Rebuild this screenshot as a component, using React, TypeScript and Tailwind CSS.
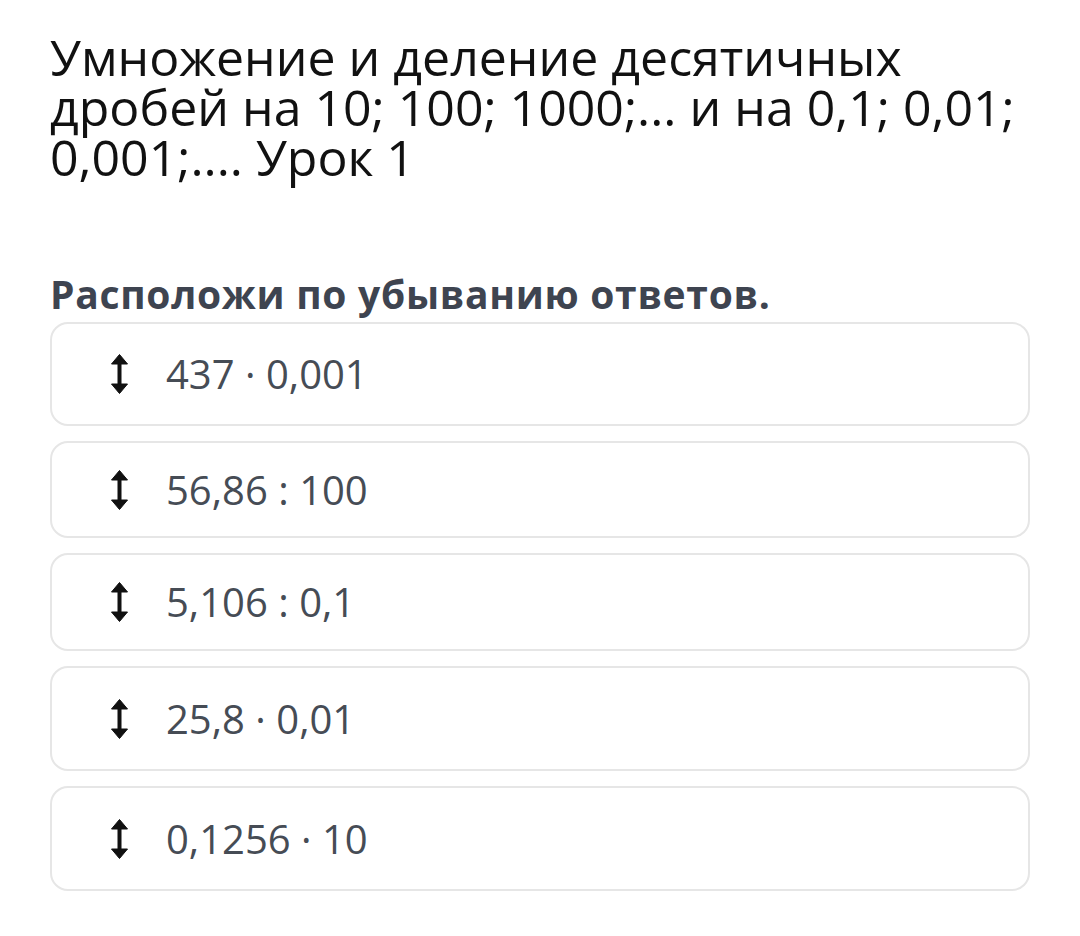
import React from 'react';

// ─── Data ─────────────────────────────────────────────────────────────────────
const ITEMS: { label: string; cls: string }[] = [
  { label: '437 · 0,001',  cls: 'h-[104px]' },
  { label: '56,86 : 100',  cls: 'h-[97px]' },
  { label: '5,106 : 0,1',  cls: 'h-[98px]' },
  { label: '25,8 · 0,01',  cls: 'h-[105px]' },
  { label: '0,1256 · 10',  cls: 'h-[105px]' },
];

// ─── Drag handle icon ─────────────────────────────────────────────────────────
const DragArrow: React.FC = () => (
  <svg width="17" height="40" viewBox="0 0 17 40" className="shrink-0" aria-hidden>
    <path d="M8.5 0.5 L16.5 10 L0.5 10 Z" fill="#111" stroke="#111" strokeWidth="1" strokeLinejoin="round" />
    <rect x="6.5" y="9" width="4" height="22" fill="#111" />
    <path d="M0.5 30 L16.5 30 L8.5 39.5 Z" fill="#111" stroke="#111" strokeWidth="1" strokeLinejoin="round" />
  </svg>
);

// ─── Main ─────────────────────────────────────────────────────────────────────
export default function App() {
  return (
    <div
      className="min-h-[936px] bg-white px-[50px] pt-[32px]"
      style={{ fontFamily: '"Open Sans", "Noto Sans", sans-serif' }}
    >
      <h1 className="text-[50px] leading-[50px] font-normal text-[#111]">
        Умножение и деление десятичных
        <br />
        дробей на 10; 100; 1000;... и на 0,1; 0,01;
        <br />
        0,001;.... Урок 1
      </h1>

      <p className="mt-[92px] text-[39px] leading-[40px] font-bold tracking-[0.7px] text-[#3e4450]">
        Расположи по убыванию ответов.
      </p>

      <div className="mt-[8px] flex flex-col gap-[15px]">
        {ITEMS.map((item) => (
          <div
            key={item.label}
            className={`flex items-center gap-[38px] rounded-[18px] border-2 border-[#e6e6e6] pl-[59px] ${item.cls}`}
          >
            <DragArrow />
            <span className="text-[40px] leading-none text-[#464c55]">{item.label}</span>
          </div>
        ))}
      </div>
    </div>
  );
}
